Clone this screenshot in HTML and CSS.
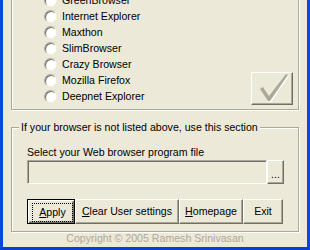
FILE: index.html
```html
<!DOCTYPE html>
<html>
<head>
<meta charset="utf-8">
<link rel="stylesheet" href="styles.css">
</head>
<body>
<div class="window">
  <div class="client">
    <div class="group browsers">
      <ul class="radios">
        <li><span class="radio"></span><span class="rlabel">GreenBrowser</span></li>
        <li><span class="radio"></span><span class="rlabel">Internet Explorer</span></li>
        <li><span class="radio"></span><span class="rlabel">Maxthon</span></li>
        <li><span class="radio"></span><span class="rlabel">SlimBrowser</span></li>
        <li><span class="radio"></span><span class="rlabel">Crazy Browser</span></li>
        <li><span class="radio"></span><span class="rlabel">Mozilla Firefox</span></li>
        <li><span class="radio"></span><span class="rlabel">Deepnet Explorer</span></li>
      </ul>
      <button class="btn check-btn" disabled>
        <svg width="40" height="31" viewBox="0 0 40 31">
          <polygon points="8,16 11,14 17,23 34,1 36,2 18,28 16,28" fill="#ffffff" transform="translate(1,1)"/>
          <polygon points="8,16 11,14 17,23 34,1 36,2 18,28 16,28" fill="#aca899"/>
        </svg>
      </button>
    </div>
    <fieldset class="group custom">
      <legend class="legend">If your browser is not listed above, use this section</legend>
      <div class="custom-body">
        <div class="field-label">Select your Web browser program file</div>
        <div class="path-row">
          <div class="path-input"></div>
          <button class="btn browse">...</button>
        </div>
        <div class="actions">
          <button class="btn default apply"><span class="focus"><u>A</u>pply</span></button>
          <button class="btn clear"><u>C</u>lear User settings</button>
          <button class="btn home"><u>H</u>omepage</button>
          <button class="btn exit">Exit</button>
        </div>
      </div>
    </fieldset>
    <div class="copyright">Copyright © 2005 Ramesh Srinivasan</div>
  </div>
</div>
</body>
</html>
```

FILE: styles.css
```css
html, body {
  margin: 0;
  padding: 0;
  width: 310px;
  height: 250px;
  overflow: hidden;
}
body {
  background: #ece9d8;
  font-family: "Liberation Sans", Arial, sans-serif;
  font-size: 10.6px;
  line-height: 13px;
  color: #000;
}
.window {
  width: 310px;
  height: 250px;
  box-sizing: border-box;
  border-left: 3px solid #0a46e0;
  border-right: 3px solid #0a46e0;
  border-bottom: 3px solid #0a3fd6;
  background: #ece9d8;
  overflow: hidden;
}
.client {
  display: flex;
  flex-direction: column;
  padding: 0 8px;
}
.group {
  border: 1px solid #aca899;
  box-shadow: inset 1px 1px 0 #fff, 1px 1px 0 #fff;
}
.browsers {
  margin-top: -9px;
  display: flex;
  align-items: flex-end;
  justify-content: space-between;
  padding: 0 5px 4px 32px;
}
.radios {
  list-style: none;
  margin: 0;
  padding: 0 0 1px 0;
}
.radios li {
  height: 16px;
  display: flex;
  align-items: center;
  gap: 5px;
}
.radio {
  width: 13px;
  height: 13px;
  box-sizing: border-box;
  border-radius: 50%;
  background: #fff;
  border: 1px solid;
  border-color: #aca899 #f1efe2 #f1efe2 #aca899;
  box-shadow: inset 1px 1px 0 #716f64;
}
.btn {
  font: inherit;
  color: #000;
  background: #ece9d8;
  box-sizing: border-box;
  margin: 0;
  padding: 0;
  border: 1px solid;
  border-color: #fff #716f64 #716f64 #fff;
  box-shadow: inset -1px -1px 0 #aca899;
  display: flex;
  align-items: center;
  justify-content: center;
}
.check-btn {
  width: 42px;
  height: 33px;
}
.check-btn svg {
  display: block;
}
.custom {
  margin: 11px 0 0 0;
  padding: 0 7px 7px 7px;
  min-width: 0;
}
.legend {
  padding: 0 2px;
  background: #ece9d8;
  line-height: 13px;
}
.custom-body {
  padding: 0 7px 0 8px;
}
.field-label {
  margin-top: 12px;
}
.path-row {
  margin-top: 1px;
  display: flex;
  height: 24px;
}
.path-input {
  width: 240px;
  box-sizing: border-box;
  border: 1px solid;
  border-color: #aca899 #fff #fff #aca899;
  box-shadow: inset 1px 1px 0 #716f64;
  background: #ece9d8;
}
.browse {
  width: 17px;
  height: 24px;
  padding-bottom: 2px;
  align-items: flex-end;
}
.actions {
  margin-top: 15px;
  display: flex;
  height: 25px;
}
.actions .btn {
  height: 25px;
}
.apply {
  width: 48px;
  border-color: #000;
  box-shadow: inset 1px 1px 0 #fff, inset -1px -1px 0 #716f64, inset -2px -2px 0 #aca899;
  justify-content: flex-start;
  align-items: flex-start;
  padding: 3px 0 0 4px;
}
.focus {
  display: flex;
  align-items: center;
  justify-content: center;
  width: 41px;
  height: 19px;
  box-sizing: border-box;
  border: 1px dotted #000;
}
.clear { width: 104px; }
.home { width: 64px; }
.exit { width: 40px; }
.copyright {
  text-align: center;
  color: #aca899;
  line-height: 13px;
}
```
